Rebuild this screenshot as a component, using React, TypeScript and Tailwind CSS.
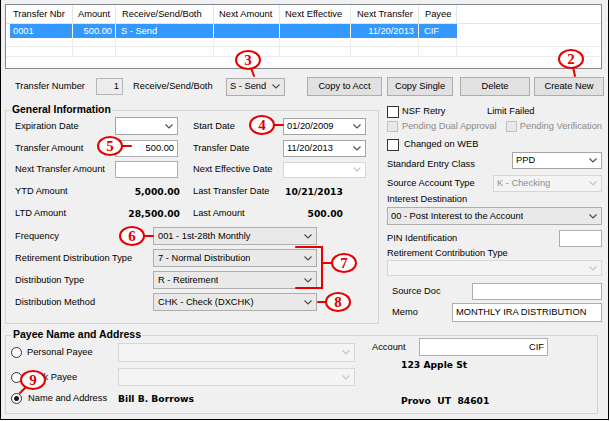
import React from "react";

type Tone = "white" | "gray" | "off";

const tones: Record<Tone, string> = {
  white: "border-[#a5a5a5] bg-white text-black",
  gray: "border-[#adadad] bg-[#e9e9e9] text-black",
  off: "border-[#d6d6d6] bg-[#f4f4f4] text-[#8d8d8d]",
};

function Chevron({ off }: { off?: boolean }) {
  return (
    <svg width="8" height="5" viewBox="0 0 8 5" className="shrink-0">
      <polyline points="0.5,0.5 4,4 7.5,0.5" fill="none" stroke={off ? "#c4c4c4" : "#505050"} strokeWidth="1.2" />
    </svg>
  );
}

function Combo({ value, tone, className }: { value?: string; tone: Tone; className: string }) {
  return (
    <div className={`flex items-center justify-between border pl-[3px] pr-[4px] ${tones[tone]} ${className}`}>
      <span className="truncate whitespace-nowrap">{value}</span>
      <Chevron off={tone === "off"} />
    </div>
  );
}

function TextBox({ value, right, className }: { value?: string; right?: boolean; className: string }) {
  return (
    <div
      className={`flex items-center border border-[#abadb3] bg-white px-[3px] whitespace-nowrap ${
        right ? "justify-end" : "justify-start"
      } ${className}`}
    >
      {value}
    </div>
  );
}

function Check({ off }: { off?: boolean }) {
  return (
    <span
      className={
        off
          ? "block h-[11px] w-[11px] shrink-0 border border-[#c2c2c2] bg-[#e8e8e8]"
          : "block h-[12px] w-[12px] shrink-0 border border-[#333333] bg-white"
      }
    />
  );
}

function Radio({ on }: { on?: boolean }) {
  return (
    <span className="flex h-[11px] w-[11px] shrink-0 items-center justify-center rounded-full border border-[#333333] bg-white">
      {on && <span className="block h-[5px] w-[5px] rounded-full bg-[#1a1a1a]" />}
    </span>
  );
}

function Btn({ label, className }: { label: string; className: string }) {
  return (
    <div className={`flex h-[19px] items-center justify-center border border-[#adadad] bg-[#e1e1e1] ${className}`}>
      {label}
    </div>
  );
}

const BOLD = "font-['DejaVu_Sans',sans-serif] text-[9.2px] font-bold";

const headers = [
  { label: "Transfer Nbr", w: "w-[67px] pl-[7px]" },
  { label: "Amount", w: "w-[43px] pl-[5px]" },
  { label: "Receive/Send/Both", w: "w-[98px] pl-[6px]" },
  { label: "Next Amount", w: "w-[66px] pl-[5px]" },
  { label: "Next Effective", w: "w-[71px] pl-[5px]" },
  { label: "Next Transfer", w: "w-[68px] pl-[6px]" },
  { label: "Payee", w: "w-[38px] pl-[6px]" },
];

const bodyWidths = ["w-[63px]", "w-[43px]", "w-[98px]", "w-[66px]", "w-[71px]", "w-[68px]", "w-[38px]"];

function TransferGrid() {
  return (
    <div className="ml-[4px] mt-[4px] h-[65px] w-[597px] border border-[#828790] bg-white">
      <div className="flex h-[19px] items-center border-b border-[#e5e5e5]">
        {headers.map((h) => (
          <div key={h.label} className={`flex h-full items-center whitespace-nowrap border-r border-[#e5e5e5] ${h.w}`}>
            {h.label}
          </div>
        ))}
      </div>
      <div className="flex h-[14px] pl-[4px] text-white">
        <div className={`${bodyWidths[0]} flex items-center border-r border-white bg-[#3399ff] pl-[3px]`}>0001</div>
        <div className={`${bodyWidths[1]} flex items-center justify-end border-r border-white bg-[#3399ff] pr-[3px]`}>500.00</div>
        <div className={`${bodyWidths[2]} flex items-center border-r border-white bg-[#3399ff] pl-[5px]`}>S - Send</div>
        <div className={`${bodyWidths[3]} border-r border-white bg-[#3399ff]`} />
        <div className={`${bodyWidths[4]} border-r border-white bg-[#3399ff]`} />
        <div className={`${bodyWidths[5]} flex items-center justify-end border-r border-white bg-[#3399ff] pr-[4px]`}>11/20/2013</div>
        <div className={`${bodyWidths[6]} flex items-center bg-[#3399ff] pl-[5px]`}>CIF</div>
      </div>
      {["h-[9px]", "h-[10px]"].map((rh) => (
        <div key={rh} className={`flex border-b border-[#ececec] pl-[4px] ${rh}`}>
          {bodyWidths.map((w, i) => (
            <div key={i} className={`${w} border-r border-[#ececec]`} />
          ))}
        </div>
      ))}
    </div>
  );
}

function Toolbar() {
  return (
    <div className="mt-[8px] flex h-[19px] items-center pl-[14px]">
      <span className="w-[81px] whitespace-nowrap">Transfer Number</span>
      <div className="flex h-[17px] w-[27px] items-center justify-end border border-[#b5b5b5] bg-[#ececec] pr-[3px]">1</div>
      <span className="ml-[10px] w-[93px] whitespace-nowrap">Receive/Send/Both</span>
      <Combo value="S - Send" tone="gray" className="h-[18px] w-[59px]" />
      <Btn label="Copy to Acct" className="ml-[22px] w-[75px]" />
      <Btn label="Copy Single" className="ml-[5px] w-[66px]" />
      <Btn label="Delete" className="ml-[7px] w-[70px]" />
      <Btn label="Create New" className="ml-[4px] w-[70px]" />
    </div>
  );
}

function GeneralInfo() {
  return (
    <div className="relative ml-[4px] mt-[7px] h-[214px] w-[374px] border border-[#d5d5d5] pl-[9px] pt-[6px]">
      <span className="absolute -top-[8px] left-[5px] whitespace-nowrap bg-[#f0f0f0] px-[1px] text-[10.4px] font-bold">
        General Information
      </span>
      <div className="flex h-[18px] items-center">
        <span className="w-[100px]">Expiration Date</span>
        <Combo tone="white" className="h-[18px] w-[63px]" />
        <span className="ml-[15px] w-[90px]">Start Date</span>
        <Combo value="01/20/2009" tone="white" className="h-[17px] w-[83px]" />
      </div>
      <div className="mt-[4px] flex h-[18px] items-center">
        <span className="w-[100px]">Transfer Amount</span>
        <TextBox value="500.00" right className="h-[17px] w-[63px]" />
        <span className="ml-[15px] w-[90px]">Transfer Date</span>
        <Combo value="11/20/2013" tone="white" className="h-[17px] w-[83px]" />
      </div>
      <div className="mt-[4px] flex h-[17px] items-center">
        <span className="w-[100px] whitespace-nowrap">Next Transfer Amount</span>
        <TextBox className="h-[17px] w-[63px]" />
        <span className="ml-[15px] w-[90px] whitespace-nowrap">Next Effective Date</span>
        <Combo tone="off" className="h-[16px] w-[83px] bg-white" />
      </div>
      <div className="mt-[2px] flex h-[22px] items-center">
        <span className="w-[100px]">YTD Amount</span>
        <span className={`w-[65px] text-right ${BOLD}`}>5,000.00</span>
        <span className="ml-[13px] w-[92px] whitespace-nowrap">Last Transfer Date</span>
        <span className={BOLD}>10/21/2013</span>
      </div>
      <div className="flex h-[22px] items-center">
        <span className="w-[100px]">LTD Amount</span>
        <span className={`w-[65px] text-right ${BOLD}`}>28,500.00</span>
        <span className="ml-[13px] w-[92px]">Last Amount</span>
        <span className={`w-[58px] text-right ${BOLD}`}>500.00</span>
      </div>
      {[
        ["Frequency", "001 - 1st-28th Monthly", "mt-[3px]"],
        ["Retirement Distribution Type", "7 - Normal Distribution", "mt-[4px]"],
        ["Distribution Type", "R - Retirement", "mt-[4px]"],
        ["Distribution Method", "CHK - Check (DXCHK)", "mt-[4px]"],
      ].map(([label, value, mt]) => (
        <div key={label} className={`flex h-[18px] items-center ${mt}`}>
          <span className="w-[138px] whitespace-nowrap">{label}</span>
          <Combo value={value} tone="gray" className="h-[18px] w-[164px] pl-[4px]" />
        </div>
      ))}
    </div>
  );
}

function SidePanel() {
  return (
    <div className="ml-[8px] flex w-[215px] flex-col">
      <div className="mt-[1px] flex h-[15px] items-center">
        <div className="flex w-[100px] items-center gap-[3px]">
          <Check />
          <span>NSF Retry</span>
        </div>
        <span className="whitespace-nowrap">Limit Failed</span>
      </div>
      <div className="flex h-[14px] items-center text-[#8a8a8a]">
        <div className="flex w-[121px] items-center gap-[4px]">
          <Check off />
          <span className="whitespace-nowrap">Pending Dual Approval</span>
        </div>
        <div className="flex items-center gap-[3px]">
          <Check off />
          <span className="whitespace-nowrap">Pending Verification</span>
        </div>
      </div>
      <div className="mt-[4px] flex h-[15px] items-center gap-[5px]">
        <Check />
        <span className="whitespace-nowrap">Changed on WEB</span>
      </div>
      <div className="flex h-[18px] items-start">
        <span className="mt-[6px] w-[125px] whitespace-nowrap">Standard Entry Class</span>
        <Combo value="PPD" tone="white" className="h-[17px] w-[90px]" />
      </div>
      <div className="mt-[5px] flex h-[17px] items-center">
        <span className="w-[106px] whitespace-nowrap">Source Account Type</span>
        <Combo value="K - Checking" tone="off" className="h-[17px] w-[109px]" />
      </div>
      <div className="flex h-[14px] items-center">Interest Destination</div>
      <Combo value="00 - Post Interest to the Account" tone="gray" className="mt-[1px] h-[18px] w-[215px]" />
      <div className="mt-[5px] flex h-[17px] items-center justify-between">
        <span>PIN Identification</span>
        <TextBox className="h-[17px] w-[43px]" />
      </div>
      <div className="flex h-[12px] items-center whitespace-nowrap">Retirement Contribution Type</div>
      <Combo tone="off" className="mt-[1px] h-[16px] w-[215px]" />
      <div className="mt-[7px] flex h-[17px] items-center">
        <span className="w-[85px] pl-[5px]">Source Doc</span>
        <TextBox className="h-[17px] w-[130px]" />
      </div>
      <div className="mt-[3px] flex h-[19px] items-center">
        <span className="w-[65px] pl-[5px]">Memo</span>
        <TextBox value="MONTHLY IRA DISTRIBUTION" className="h-[19px] w-[150px]" />
      </div>
    </div>
  );
}

function PayeeBox() {
  return (
    <div className="relative ml-[4px] mt-[11px] flex h-[79px] w-[593px] border border-[#d5d5d5] pl-[5px]">
      <span className="absolute -top-[8px] left-[6px] whitespace-nowrap bg-[#f0f0f0] px-[1px] text-[10.5px] font-bold">
        Payee Name and Address
      </span>
      <div className="flex w-[344px] flex-col pt-[7px]">
        <div className="flex h-[19px] items-center">
          <div className="flex w-[107px] items-center gap-[5px]">
            <Radio />
            <span className="whitespace-nowrap">Personal Payee</span>
          </div>
          <Combo tone="off" className="h-[19px] w-[237px]" />
        </div>
        <div className="mt-[6px] flex h-[18px] items-center">
          <div className="flex w-[107px] items-center gap-[5px]">
            <Radio />
            <span className="whitespace-nowrap">Bank Payee</span>
          </div>
          <Combo tone="off" className="h-[18px] w-[237px]" />
        </div>
        <div className="mt-[5px] flex h-[14px] items-center">
          <div className="flex w-[107px] items-center gap-[6px]">
            <Radio on />
            <span className="whitespace-nowrap">Name and Address</span>
          </div>
          <span className={BOLD}>Bill B. Borrows</span>
        </div>
      </div>
      <div className="ml-[17px] flex flex-col pt-[2px]">
        <div className="flex h-[18px] items-center">
          <span className="w-[47px]">Account</span>
          <TextBox value="CIF" right className="h-[18px] w-[129px]" />
        </div>
        <span className={`mt-[2px] pl-[29px] leading-[13px] ${BOLD}`}>123 Apple St</span>
        <span className={`mt-[23px] whitespace-pre pl-[29px] leading-[13px] ${BOLD}`}>Provo  UT  84601</span>
      </div>
    </div>
  );
}

const callouts = [
  { n: "3", cx: 248, cy: 60 },
  { n: "2", cx: 571, cy: 59 },
  { n: "4", cx: 262, cy: 125 },
  { n: "5", cx: 110, cy: 146 },
  { n: "6", cx: 132, cy: 236 },
  { n: "7", cx: 344, cy: 263 },
  { n: "8", cx: 338, cy: 302 },
  { n: "9", cx: 33, cy: 380 },
];

function Callouts() {
  return (
    <svg width="610" height="421" className="pointer-events-none absolute -left-px top-0">
      <g stroke="#e60000" strokeWidth="2" fill="none" strokeLinecap="round">
        <line x1="251" y1="68" x2="254" y2="76" />
        <line x1="573" y1="67" x2="575" y2="76" />
        <line x1="274" y1="125" x2="283" y2="125" />
        <line x1="122" y1="146" x2="131" y2="146" />
        <line x1="144" y1="236" x2="153" y2="236" />
        <path d="M296 247 H322 V288 H296" />
        <line x1="322" y1="263" x2="332" y2="263" />
        <line x1="318" y1="302" x2="326" y2="302" />
        <line x1="26" y1="387" x2="20" y2="393" />
      </g>
      {callouts.map((c) => (
        <g key={c.n}>
          <ellipse cx={c.cx} cy={c.cy} rx="12" ry="9" fill="#ffffff" stroke="#e60000" strokeWidth="2" />
          <text
            x={c.cx}
            y={c.cy + 5}
            textAnchor="middle"
            fontFamily="'Liberation Serif', serif"
            fontWeight="bold"
            fontSize="15"
            fill="#e00000"
          >
            {c.n}
          </text>
        </g>
      ))}
    </svg>
  );
}

export default function App() {
  return (
    <div className="relative h-[420px] w-[609px] overflow-hidden border-x border-b border-black bg-[#f0f0f0] font-['Liberation_Sans',Arial,sans-serif] text-[9.3px] leading-[13px] text-black">
      <TransferGrid />
      <Toolbar />
      <div className="mt-[7px] flex">
        <GeneralInfo />
        <SidePanel />
      </div>
      <PayeeBox />
      <Callouts />
    </div>
  );
}
